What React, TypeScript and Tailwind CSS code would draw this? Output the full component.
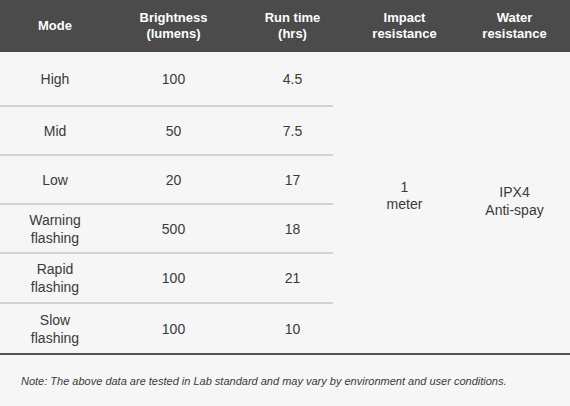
const rows = [
  { mode: ['High'], lumens: '100', hours: '4.5', h: 'h-[55px]' },
  { mode: ['Mid'], lumens: '50', hours: '7.5', h: 'h-[49px]' },
  { mode: ['Low'], lumens: '20', hours: '17', h: 'h-[49px]' },
  { mode: ['Warning', 'flashing'], lumens: '500', hours: '18', h: 'h-[49px]' },
  { mode: ['Rapid', 'flashing'], lumens: '100', hours: '21', h: 'h-[50px]' },
  { mode: ['Slow', 'flashing'], lumens: '100', hours: '10', h: 'h-[49px]' },
];

function HeadCell({ lines, className }: { lines: string[]; className: string }) {
  return (
    <div className={`flex flex-col items-center justify-center text-center ${className}`}>
      {lines.map((l) => (
        <span key={l}>{l}</span>
      ))}
    </div>
  );
}

export default function App() {
  return (
    <div
      className="w-[570px] h-[406px] bg-[#f6f6f6] text-[#3a3a3a] overflow-hidden"
      style={{ fontFamily: '"Liberation Sans", Arial, sans-serif' }}
    >
      <div className="flex h-[52px] bg-[#4b4b4b] text-white text-[13px] font-bold leading-[16px]">
        <HeadCell lines={['Mode']} className="w-[110px]" />
        <HeadCell lines={['Brightness', '(lumens)']} className="w-[127px]" />
        <HeadCell lines={['Run time', '(hrs)']} className="w-[96px] pl-[15px]" />
        <HeadCell lines={['Impact', 'resistance']} className="w-[126px] pl-[17px]" />
        <HeadCell lines={['Water', 'resistance']} className="w-[111px] pt-[0px]" />
      </div>

      <div className="flex border-b-2 border-[#555555] text-[14px] leading-[18px]">
        <div className="w-[333px] flex flex-col">
          {rows.map((r, i) => (
            <div
              key={i}
              className={`flex items-center ${r.h} ${i < rows.length - 1 ? 'border-b-2 border-[#d2d2d2]' : ''}`}
            >
              <div className="w-[110px] flex flex-col items-center text-center">
                {r.mode.map((m) => (
                  <span key={m}>{m}</span>
                ))}
              </div>
              <div className="w-[127px] text-center">{r.lumens}</div>
              <div className="w-[96px] pl-[15px] text-center">{r.hours}</div>
            </div>
          ))}
        </div>
        <div className="w-[126px] pl-[17px] flex flex-col items-center justify-center text-center leading-[17px] pb-[14px]">
          <span>1</span>
          <span>meter</span>
        </div>
        <div className="w-[111px] flex flex-col items-center justify-center text-center pb-[4px]">
          <span>IPX4</span>
          <span>Anti-spay</span>
        </div>
      </div>

      <p className="pl-[21px] pt-[19px] text-[11px] italic leading-[14px] text-[#3a3a3a]">
        Note: The above data are tested in Lab standard and may vary by environment and user conditions.
      </p>
    </div>
  );
}
